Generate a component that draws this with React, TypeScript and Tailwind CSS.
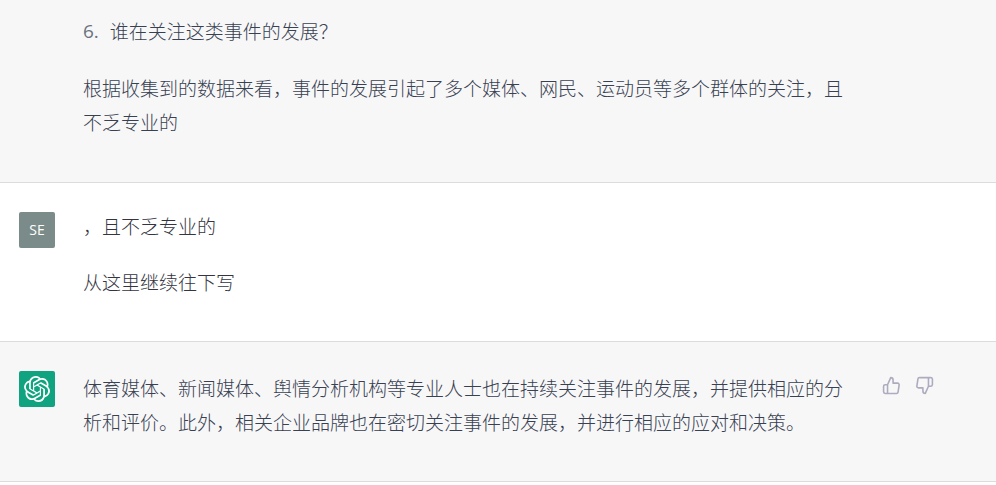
import type { ReactNode } from "react";
import { FiThumbsDown, FiThumbsUp } from "react-icons/fi";
import { SiOpenai } from "react-icons/si";

function Row({
  avatar,
  actions,
  shaded = false,
  first = false,
  children,
}: {
  avatar?: ReactNode;
  actions?: ReactNode;
  shaded?: boolean;
  first?: boolean;
  children: ReactNode;
}) {
  return (
    <article
      className={`flex gap-7 border-b border-[#dcdcdd] px-[19px] ${
        first ? "pt-[14px] pb-[43px]" : "pt-[29px] pb-[42px]"
      } ${shaded ? "bg-[#f7f7f8] text-[#374151]" : "bg-white text-[#343541]"}`}
    >
      <div className="w-9 shrink-0">{avatar}</div>
      <div className="min-w-0 flex-1">{children}</div>
      <div className="w-24 shrink-0">{actions}</div>
    </article>
  );
}

export default function App() {
  return (
    <main className="min-h-screen bg-white font-['Noto_Sans_CJK_SC',sans-serif] text-[19px] leading-[34px] font-light">
      <Row shaded first>
        <ol start={6} className="mb-[23px] list-none">
          <li className="flex gap-[11px]">
            <span className="font-['Open_Sans',sans-serif] font-normal text-[#6b7280]">6.</span>
            谁在关注这类事件的发展？
          </li>
        </ol>
        <p>
          根据收集到的数据来看，事件的发展引起了多个媒体、网民、运动员等多个群体的关注，且不乏专业的
        </p>
      </Row>

      <Row
        avatar={
          <div className="flex size-9 items-center justify-center rounded-xs bg-[#7b8b8a] font-['Open_Sans',sans-serif] text-[14px] font-normal text-white">
            SE
          </div>
        }
      >
        <p className="pb-[3px] leading-[28px] whitespace-pre-wrap">
          {"，且不乏专业的\n\n从这里继续往下写"}
        </p>
      </Row>

      <Row
        shaded
        avatar={
          <div className="flex size-9 items-center justify-center rounded-xs bg-[#10a37f] text-white">
            <SiOpenai className="size-[26px]" aria-label="ChatGPT" />
          </div>
        }
        actions={
          <div className="flex gap-[14px] pl-px pt-[5px] text-[#acacbe]">
            <button type="button" aria-label="赞">
              <FiThumbsUp className="size-[19px]" />
            </button>
            <button type="button" aria-label="踩">
              <FiThumbsDown className="size-[19px]" />
            </button>
          </div>
        }
      >
        <p>
          体育媒体、新闻媒体、舆情分析机构等专业人士也在持续关注事件的发展，并提供相应的分析和评价。此外，相关企业品牌也在密切关注事件的发展，并进行相应的应对和决策。
        </p>
      </Row>
    </main>
  );
}
